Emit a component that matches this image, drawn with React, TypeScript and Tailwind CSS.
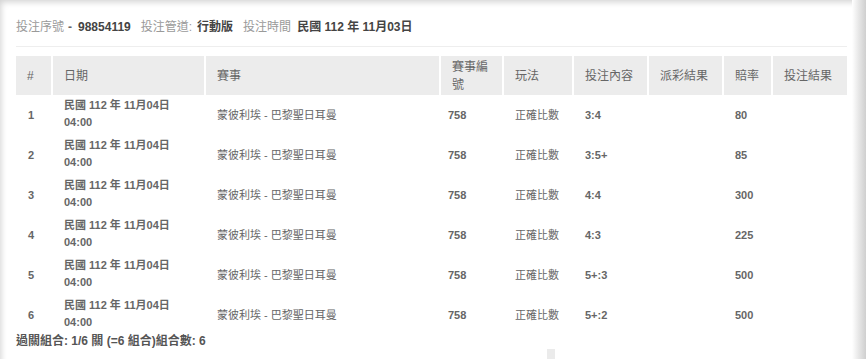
import React from "react";

const rows = [
  { n: 1, bet: "3:4", odds: "80" },
  { n: 2, bet: "3:5+", odds: "85" },
  { n: 3, bet: "4:4", odds: "300" },
  { n: 4, bet: "4:3", odds: "225" },
  { n: 5, bet: "5+:3", odds: "500" },
  { n: 6, bet: "5+:2", odds: "500" },
];

const headers = ["#", "日期", "賽事", "賽事編號", "玩法", "投注內容", "派彩結果", "賠率", "投注結果"];
const widths = [36, 153, 235, 63, 70, 75, 75, 49, 75];

export default function App() {
  return (
    <div
      className="w-[866px] h-[359px] overflow-hidden bg-white flex"
      style={{ fontFamily: '"Liberation Sans", Arial, "Noto Sans CJK TC", sans-serif' }}
    >
      <div className="relative w-[852px] h-full bg-white shadow-[inset_5px_6px_6px_-4px_rgba(0,0,0,0.18)] pl-[16px] pr-[5px]">
        <div className="pt-[19px] h-[46px] text-[12px] leading-[16px] flex items-start whitespace-nowrap">
          <span className="text-[#9a9a9a]">投注序號</span>
          <span className="text-[#666] font-bold ml-[4px]">-</span>
          <span className="text-[#444] font-bold ml-[6px]">98854119</span>
          <span className="text-[#9a9a9a] ml-[10px]">投注管道:</span>
          <span className="text-[#444] font-bold ml-[5px]">行動版</span>
          <span className="text-[#9a9a9a] ml-[10px]">投注時間</span>
          <span className="text-[#444] font-bold ml-[6px]">民國 112 年 11月03日</span>
        </div>
        <div className="w-[831px] border-t border-[#eeeeee] pt-[9px]">
          <table className="table-fixed border-collapse w-[831px]">
            <colgroup>
              {widths.map((w, i) => (
                <col key={i} style={{ width: w }} />
              ))}
            </colgroup>
            <thead>
              <tr className="bg-[#ececec] h-[39px]">
                {headers.map((h, i) => (
                  <th
                    key={h}
                    className={`text-left font-normal text-[12px] leading-[18px] text-[#666] pl-[11px] pr-[6px] align-middle ${
                      i > 0 ? "border-l-2 border-white" : ""
                    }`}
                  >
                    {h}
                  </th>
                ))}
              </tr>
            </thead>
            <tbody className="text-[11px] text-[#666]">
              {rows.map((r) => (
                <tr key={r.n} className="h-[40px]">
                  <td className="pl-[12px] font-bold align-middle">{r.n}</td>
                  <td className="pl-[12px] font-bold leading-[17px] align-middle pb-[3px]">
                    民國 112 年 11月04日
                    <br />
                    04:00
                  </td>
                  <td className="pl-[12px] align-middle">蒙彼利埃 - 巴黎聖日耳曼</td>
                  <td className="pl-[8px] font-bold align-middle">758</td>
                  <td className="pl-[12px] align-middle">正確比數</td>
                  <td className="pl-[12px] font-bold align-middle">{r.bet}</td>
                  <td className="pl-[12px] align-middle"></td>
                  <td className="pl-[12px] font-bold align-middle">{r.odds}</td>
                  <td className="pl-[12px] align-middle"></td>
                </tr>
              ))}
            </tbody>
          </table>
        </div>
        <div className="mt-[-1px] text-[12px] leading-[14px] text-[#555] font-bold">
          過關組合: 1/6 關 (=6 組合)組合數: 6
        </div>
        <div className="ml-[531px] mt-[1px] w-[8px] h-[12px] bg-[#ebebeb]"></div>
      </div>
      <div className="w-[14px] h-full bg-gradient-to-r from-white via-[#e6e6e6] to-[#cfcfcf]"></div>
    </div>
  );
}
